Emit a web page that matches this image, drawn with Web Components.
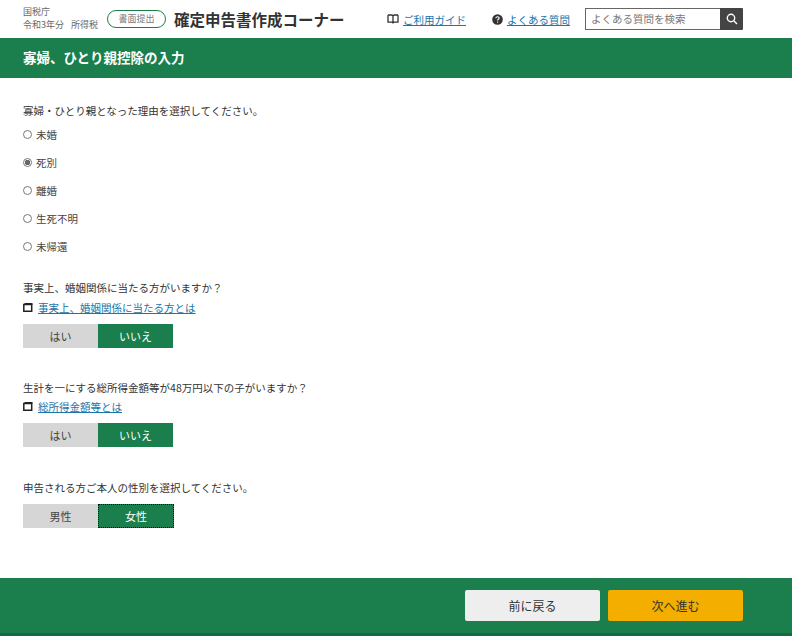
<!DOCTYPE html>
<html lang="ja">
<head>
<meta charset="utf-8">
<title>寡婦、ひとり親控除の入力</title>
<style>
  html, body { margin: 0; height: 100%; background: #fff; }
  body { font-family: "Noto Sans CJK JP", "Liberation Sans", sans-serif; color: #333; }
</style>
</head>
<body>
<tax-page>
  <tax-header slot="header"></tax-header>
  <tax-title slot="title">寡婦、ひとり親控除の入力</tax-title>

  <radio-group legend="寡婦・ひとり親となった理由を選択してください。" options="未婚,死別,離婚,生死不明,未帰還" selected="死別"></radio-group>

  <tax-question style="--top:19px;--link-gap:1px" text="事実上、婚姻関係に当たる方がいますか？" link="事実上、婚姻関係に当たる方とは" left="はい" right="いいえ"></tax-question>
  <tax-question style="--top:31px;--link-gap:0px" text="生計を一にする総所得金額等が48万円以下の子がいますか？" link="総所得金額等とは" left="はい" right="いいえ"></tax-question>
  <tax-question style="--top:32px" text="申告される方ご本人の性別を選択してください。" left="男性" right="女性" focus></tax-question>

  <tax-footer slot="footer"></tax-footer>
</tax-page>

<script>
(function () {
  const FONT = '"Noto Sans CJK JP", "Liberation Sans", sans-serif';

  class TaxPage extends HTMLElement {
    constructor() {
      super();
      this.attachShadow({ mode: 'open' }).innerHTML = `
        <style>
          :host { display: flex; flex-direction: column; height: 636px; font-family: ${FONT}; overflow: hidden; }
          main { flex: 1; padding: 24px 23px 0; }
        </style>
        <slot name="header"></slot>
        <slot name="title"></slot>
        <main><slot></slot></main>
        <slot name="footer"></slot>
      `;
    }
  }

  class TaxHeader extends HTMLElement {
    constructor() {
      super();
      this.attachShadow({ mode: 'open' }).innerHTML = `
        <style>
          :host { display: flex; align-items: center; height: 38px; padding: 0 49px 0 23px; background: #fff; color: #333; }
          .org { font-size: 9px; line-height: 13px; color: #666; width: 84px; white-space: nowrap; margin-top: -2px; }
          .org span { margin-left: 7px; }
          .pill { box-sizing: border-box; width: 59px; height: 18px; border: 1px solid #1a7f4c; border-radius: 9px;
                  font-size: 9px; line-height: 16px; text-align: center; color: #777; }
          h1 { margin: 0 0 0 8px; font-size: 15.500px; font-weight: 700; line-height: 20px; color: #333; white-space: nowrap; }
          .nav { margin-left: auto; display: flex; align-items: center; }
          a { color: #1a75a8; font-size: 10.500px; text-decoration: underline; white-space: nowrap; }
          svg { display: block; flex: none; }
          .guide { margin-right: 26px; display: flex; align-items: center; gap: 4px; }
          .faq { margin-right: 15px; display: flex; align-items: center; gap: 4px; }
          .search { display: flex; width: 158px; height: 22px; }
          .box { box-sizing: border-box; flex: 1; border: 1px solid #666; border-right: 0; font-size: 10.500px; line-height: 20px; color: #777; padding-left: 5px; white-space: nowrap; }
          .btn { width: 23px; background: #444; display: flex; align-items: center; justify-content: center; border-radius: 0 1px 1px 0; }
        </style>
        <div class="org">国税庁<br>令和3年分<span>所得税</span></div>
        <div class="pill">書面提出</div>
        <h1>確定申告書作成コーナー</h1>
        <div class="nav">
          <div class="guide">
            <svg width="12" height="10" viewBox="0 0 12 10" fill="none" stroke="#333" stroke-width="1.300"><path d="M1 1h3.500c.9 0 1.500.5 1.500 1.300V9M11 1H7.500C6.600 1 6 1.500 6 2.300M1 1v7.200h4.300l.7.700.7-.7H11V1"/></svg>
            <a>ご利用ガイド</a>
          </div>
          <div class="faq">
            <svg width="11" height="11" viewBox="0 0 11 11"><circle cx="5.500" cy="5.500" r="5.300" fill="#333"/><path d="M3.800 4.200c.1-1 .8-1.500 1.700-1.500s1.700.5 1.700 1.400c0 1.100-1.600 1.200-1.600 2.300" fill="none" stroke="#fff" stroke-width="1.100"/><circle cx="5.600" cy="8.100" r=".7" fill="#fff"/></svg>
            <a>よくある質問</a>
          </div>
          <div class="search">
            <div class="box">よくある質問を検索</div>
            <div class="btn"><svg width="12" height="12" viewBox="0 0 12 12" fill="none" stroke="#fff" stroke-width="1.400"><circle cx="5" cy="5" r="3.700"/><path d="M7.800 7.800 11 11"/></svg></div>
          </div>
        </div>
      `;
    }
  }

  class TaxTitle extends HTMLElement {
    constructor() {
      super();
      this.attachShadow({ mode: 'open' }).innerHTML = `
        <style>
          :host { box-sizing: border-box; display: flex; align-items: center; height: 40px; padding: 0 23px 2px; background: #1a7f4c; color: #fff; font-size: 13.500px; font-weight: 700; }
        </style>
        <slot></slot>
      `;
    }
  }

  class RadioGroup extends HTMLElement {
    constructor() {
      super();
      const root = this.attachShadow({ mode: 'open' });
      const sel = this.getAttribute('selected');
      const rows = (this.getAttribute('options') || '').split(',').map(o => `
        <div class="row">
          <span class="dot${o === sel ? ' on' : ''}"></span>${o}
        </div>`).join('');
      root.innerHTML = `
        <style>
          :host { display: block; font-size: 10.500px; color: #333; }
          .legend { line-height: 18px; }
          .row { display: flex; align-items: center; height: 28px; color: #444; }
          .dot { box-sizing: border-box; width: 9px; height: 9px; border-radius: 50%; border: 1px solid #777; margin-right: 4px; background: #fff; }
          .dot.on { background: radial-gradient(circle, #666 0 2.500px, #fff 3px); }
        </style>
        <div class="legend">${this.getAttribute('legend')}</div>
        ${rows}
      `;
    }
  }

  class TaxQuestion extends HTMLElement {
    constructor() {
      super();
      const root = this.attachShadow({ mode: 'open' });
      const link = this.getAttribute('link');
      const focus = this.hasAttribute('focus');
      root.innerHTML = `
        <style>
          :host { display: block; margin-top: var(--top, 30px); font-size: 10.500px; color: #333; }
          .text { line-height: 18px; }
          .link { display: flex; align-items: center; gap: 5px; height: 18px; margin-top: var(--link-gap, 1px); }
          .link svg { display: block; }
          a { color: #1a75a8; text-decoration: underline; font-size: 10.500px; }
          .toggle { display: flex; height: 24px; margin-top: 8px; font-size: 11px; }
          .toggle div { box-sizing: border-box; width: 75px; text-align: center; line-height: 24px; }
          .no { background: #d6d6d6; color: #444; }
          .yes { background: #1a7f4c; color: #fff; }
          .toggle .focus { width: 76px; outline: 1px dotted #111; outline-offset: -1px; }
          .plain { margin-top: 7px; }
        </style>
        <div class="text">${this.getAttribute('text')}</div>
        ${link ? `<div class="link">
          <svg width="10" height="10" viewBox="0 0 10 10"><path d="M.8 2.400h7.900v6.800H.8z" fill="#fff" stroke="#222" stroke-width="1.500"/><path d="M1.500 1h8v1.800h-8z" fill="#222"/></svg>
          <a>${link}</a>
        </div>` : ''}
        <div class="toggle${link ? '' : ' plain'}">
          <div class="no">${this.getAttribute('left')}</div>
          <div class="yes${focus ? ' focus' : ''}">${this.getAttribute('right')}</div>
        </div>
      `;
    }
  }

  class TaxFooter extends HTMLElement {
    constructor() {
      super();
      this.attachShadow({ mode: 'open' }).innerHTML = `
        <style>
          :host { box-sizing: border-box; display: flex; justify-content: flex-end; gap: 8px; height: 58px; padding: 12px 49px 0 0;
                  background: #1a7f4c; border-bottom: 3px solid #14693e; }
          button { all: unset; box-sizing: border-box; width: 135px; height: 31px; border-radius: 2px; text-align: center;
                   font: 12px/31px ${FONT}; color: #333; }
          .back { background: #eee; }
          .next { background: #f4ae00; }
        </style>
        <button class="back">前に戻る</button>
        <button class="next">次へ進む</button>
      `;
    }
  }

  customElements.define('tax-page', TaxPage);
  customElements.define('tax-header', TaxHeader);
  customElements.define('tax-title', TaxTitle);
  customElements.define('radio-group', RadioGroup);
  customElements.define('tax-question', TaxQuestion);
  customElements.define('tax-footer', TaxFooter);
})();
</script>
</body>
</html>
